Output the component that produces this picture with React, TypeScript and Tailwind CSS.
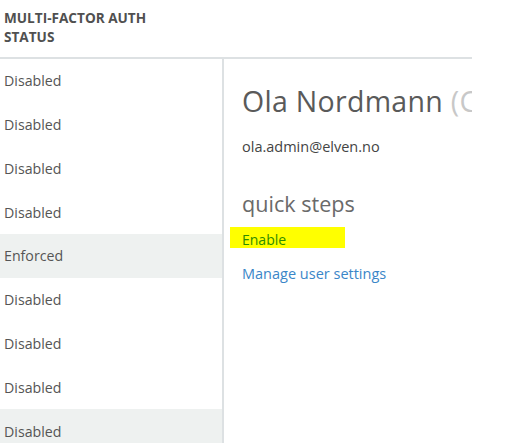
import React from "react";

const rows = [
  { label: "Disabled", hl: false },
  { label: "Disabled", hl: false },
  { label: "Disabled", hl: false },
  { label: "Disabled", hl: false },
  { label: "Enforced", hl: true },
  { label: "Disabled", hl: false },
  { label: "Disabled", hl: false },
  { label: "Disabled", hl: false },
  { label: "Disabled", hl: true },
];

export default function App() {
  return (
    <div
      className="w-[530px] h-[443px] overflow-hidden bg-white text-[#555]"
      style={{ fontFamily: '"Open Sans", "Noto Sans", sans-serif' }}
    >
      <div className="w-[472px]">
        <div className="h-[57px] pl-[4px] pt-[8px] text-[13.6px] font-bold leading-[19px] text-[#505050]">
          MULTI-FACTOR AUTH
          <br />
          STATUS
        </div>
        <div className="h-[2px] bg-[#dde1e3]" />
        <div className="flex">
          <div className="w-[222px] shrink-0">
            {rows.map((r, i) => (
              <div
                key={i}
                className={`h-[43.8px] flex items-center pl-[4px] text-[14.2px] text-[#555] ${r.hl ? "bg-[#eef1f0]" : ""}`}
              >
                {r.label}
              </div>
            ))}
          </div>
          <div className="w-[2px] bg-[#dde1e3] shrink-0" />
          <div className="flex-1 min-w-0 overflow-hidden pl-[18px] pt-[23px]">
            <div className="whitespace-nowrap text-[28.5px] leading-[38px] text-[#5a5a5a] tracking-[0.3px]">
              Ola Nordmann <span className="text-[#c8c8c8]">(C</span>
            </div>
            <div className="mt-[18px] text-[14.5px] leading-[18px] text-[#444]">ola.admin@elven.no</div>
            <div className="mt-[35px] text-[21.6px] leading-[26px] text-[#6a6a6a]">quick steps</div>
            <div className="relative mt-[13px] h-[20px]">
              <div className="absolute left-[-12px] top-[-3px] w-[115px] h-[21px] bg-[#ffff00]" />
              <div className="relative text-[14px] leading-[20px] text-[#2e8b00]">Enable</div>
            </div>
            <div className="mt-[14px] text-[14.5px] leading-[20px] text-[#3a86c8]">Manage user settings</div>
          </div>
        </div>
      </div>
    </div>
  );
}
